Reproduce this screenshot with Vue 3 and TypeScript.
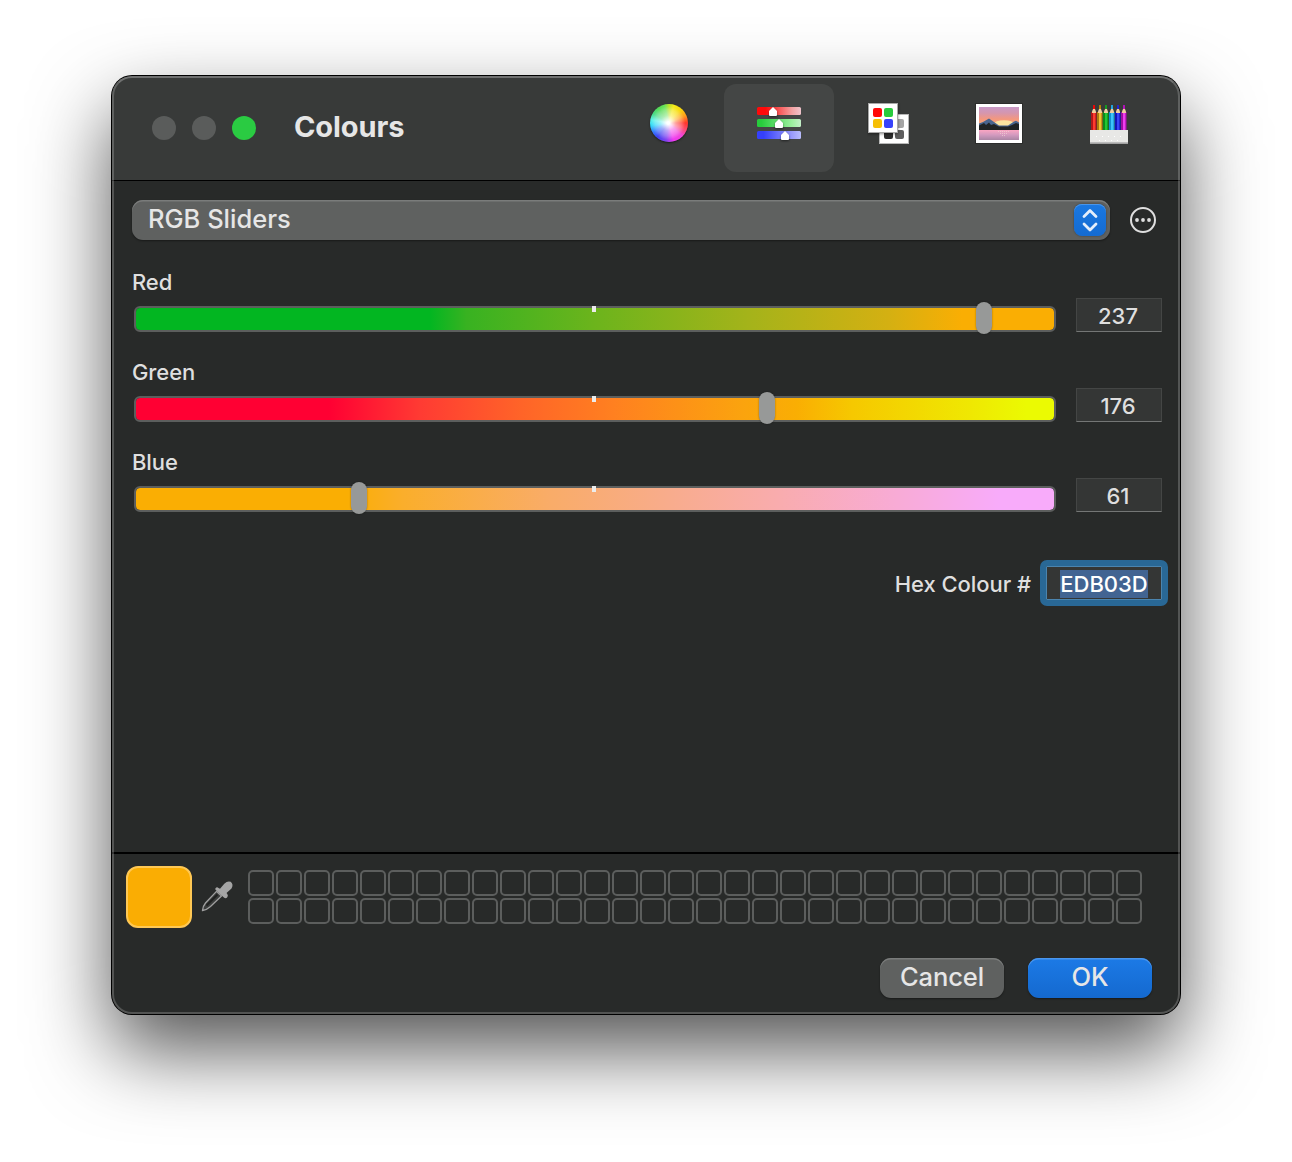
<script setup lang="ts">
import { computed, ref } from 'vue'

interface Channel {
  name: string
  value: number
  kind: string
}

const channels = ref<Channel[]>([
  { name: 'Red', value: 237, kind: 'red' },
  { name: 'Green', value: 176, kind: 'green' },
  { name: 'Blue', value: 61, kind: 'blue' },
])

const hex = computed(() =>
  channels.value.map((c) => c.value.toString(16).padStart(2, '0')).join('').toUpperCase(),
)

// The knob travels about 905px from one end of the groove to the other.
const knobLeft = (value: number) => `${Math.round((value / 255) * 905.5 - 1.6)}px`

const pencils = [
  ['#b01818', '#ff3b30', '#ff0000'],
  ['#a87c10', '#f5c12e', '#c08a00'],
  ['#0c8a1c', '#22c832', '#10a820'],
  ['#1390d0', '#3cc4fa', '#20b0f0'],
  ['#1414b8', '#3a44f8', '#2020e0'],
  ['#a010a0', '#f03cf0', '#c010c8'],
]
const cells = 64
</script>

<template>
  <main class="desktop">
    <section class="window">
      <header class="titlebar">
        <div class="lights">
          <i class="light"></i><i class="light"></i><i class="light zoom"></i>
        </div>
        <h1 class="title">Colours</h1>
        <nav class="tabs">
          <button class="tab" aria-label="Wheel">
            <span class="wheel"></span>
          </button>
          <button class="tab active" aria-label="Sliders">
            <svg width="50" height="44" viewBox="0 0 50 44">
              <defs>
                <linearGradient id="sr"><stop offset=".2" stop-color="#ff0a0a" /><stop offset=".8" stop-color="#f2a3a3" /><stop offset="1" stop-color="#efc4cc" /></linearGradient>
                <linearGradient id="sg"><stop offset=".1" stop-color="#27cc3c" /><stop offset=".8" stop-color="#9df09f" /><stop offset="1" stop-color="#c4efc8" /></linearGradient>
                <linearGradient id="sb"><stop offset=".15" stop-color="#3540fb" /><stop offset=".8" stop-color="#9c9dfb" /><stop offset="1" stop-color="#b9bdfb" /></linearGradient>
              </defs>
              <rect x="3" y="5" width="44" height="8" rx="1.5" fill="url(#sr)" />
              <rect x="3" y="17" width="44" height="8" rx="1.5" fill="url(#sg)" />
              <rect x="3" y="29" width="44" height="8" rx="1.5" fill="url(#sb)" />
              <g fill="#fff" class="knobs">
                <path d="M19 5l4 4v4q0 1-1 1h-6q-1 0-1-1V9z" />
                <path d="M25 17l4 4v4q0 1-1 1h-6q-1 0-1-1v-4z" />
                <path d="M31 29l4 4v4q0 1-1 1h-6q-1 0-1-1v-4z" />
              </g>
            </svg>
          </button>
          <button class="tab" aria-label="Palettes">
            <svg width="44" height="44" viewBox="0 0 44 44">
              <rect x="12.5" y="12.5" width="29" height="29" fill="#fff" stroke="#b8b8b8" />
              <rect x="28" y="17" width="9" height="9" rx="2" fill="#a5a5a5" />
              <rect x="17" y="28" width="9" height="9" rx="2" fill="#2c2c2c" />
              <rect x="28" y="28" width="9" height="9" rx="2" fill="#5e5e5e" />
              <g class="front">
                <rect x="1.5" y="1.5" width="29" height="29" fill="#fff" stroke="#a8a8a8" />
              </g>
              <rect x="6" y="6" width="9" height="9" rx="2" fill="#ff0808" />
              <rect x="17" y="6" width="9" height="9" rx="2" fill="#28cb3c" />
              <rect x="6" y="17" width="9" height="9" rx="2" fill="#f6bf05" />
              <rect x="17" y="17" width="9" height="9" rx="2" fill="#3742fb" />
            </svg>
          </button>
          <button class="tab" aria-label="Image">
            <svg class="photo" width="48" height="42" viewBox="0 0 48 42">
              <defs>
                <linearGradient id="sky" x2="0" y2="1"><stop offset="0" stop-color="#c99ac8" /><stop offset=".3" stop-color="#d596ae" /><stop offset=".6" stop-color="#f3977f" /><stop offset="1" stop-color="#fdb878" /></linearGradient>
                <linearGradient id="sea" x2="0" y2="1"><stop offset="0" stop-color="#fba5c2" /><stop offset=".5" stop-color="#d29abf" /><stop offset="1" stop-color="#aa86a4" /></linearGradient>
              </defs>
              <rect x=".5" y=".5" width="47" height="40" fill="#fff" stroke="#2b2c2b" />
              <rect x="4" y="4" width="40" height="20" fill="url(#sky)" />
              <ellipse cx="29" cy="21" rx="10" ry="3.800" fill="#fbe3a0" />
              <path d="M4 20.500l4-1.500 6-3.500 5 3.500 5 3.500h9l6-4 2-.8 3 1.800v5H4z" fill="#48648f" />
              <path d="M4 22.500l5-2.500 2 2 3-2.500 2 2.500 3-1 5 2.500h9l4-1.500 4-2 3 1v6H4z" fill="#202325" />
              <rect x="4" y="27" width="40" height="10" fill="url(#sea)" />
              <path d="M23 28.500h11M25 30.500h7M27 32.500h4" stroke="#f3d3d6" stroke-width="1" stroke-dasharray="1 1" opacity=".7" />
            </svg>
          </button>
          <button class="tab" aria-label="Pencils">
            <svg width="38" height="42" viewBox="0 0 38 42">
              <g v-for="(p, i) in pencils" :key="i" :transform="`translate(${1 + i * 6} 2)`">
                <path d="M0 8h5.600v18H0z" :fill="p[0]" />
                <path d="M2 8.500h2.400V26H2z" :fill="p[1]" />
                <path d="M1 9V7.500L2.300 4.500h1.400L5 7.500V9z" fill="#f0cf9e" />
                <path d="M2 5L2.200 1h1.600L4 5z" :fill="p[2]" />
              </g>
              <rect x="0" y="28" width="38" height="13.500" fill="#e8e8e6" />
              <rect x="0" y="40.300" width="38" height="1.500" fill="#a9a9a9" />
              <path d="M6 34.500h27M9 38.500h21" stroke="#fff" stroke-width="1" stroke-dasharray="1 5" />
            </svg>
          </button>
        </nav>
      </header>

      <div class="body">
        <div class="mode">
          <button class="popup">
            <span class="popup-text">RGB Sliders</span>
            <span class="stepper">
              <svg width="32" height="32" viewBox="0 0 32 32" fill="none" stroke="#e4eefb" stroke-width="2.800" stroke-linecap="round" stroke-linejoin="round">
                <path d="M10 12.500L16 6.500l6 6M10 20l6 6 6-6" />
              </svg>
            </span>
          </button>
          <svg class="more" width="28" height="28" viewBox="0 0 28 28">
            <circle cx="14" cy="14" r="12" fill="none" stroke="#dfdfdf" stroke-width="2" />
            <g fill="#dfdfdf"><circle cx="8" cy="14" r="1.900" /><circle cx="14" cy="14" r="1.900" /><circle cx="20" cy="14" r="1.900" /></g>
          </svg>
        </div>

        <div v-for="c in channels" :key="c.name" class="channel">
          <div class="slider">
            <label class="name">{{ c.name }}</label>
            <div class="track" :class="c.kind">
              <i class="tick"></i>
              <i class="knob" :style="{ left: knobLeft(c.value) }"></i>
            </div>
          </div>
          <div class="value">{{ c.value }}</div>
        </div>

        <div class="hex">
          <label class="hex-label">Hex Colour #</label>
          <div class="hex-field"><span class="selection">{{ hex }}</span></div>
        </div>
      </div>

      <footer class="footer">
        <div class="wells">
          <div class="well"></div>
          <svg class="dropper" width="34" height="34" viewBox="0 0 34 34">
            <path d="M2.500 31.500q0-3.800 3-7.500L16.500 12.300l5 4.600L10.500 27.500q-4 3.600-8 4z" fill="#3a3c3b" stroke="#a0a0a0" stroke-width="1.300" />
            <path d="M6.500 26.500l11-11" stroke="#1f201f" stroke-width="2" />
            <path d="M15.500 9.300q1.300-1.700 3-.4l1.500.8 4.300-5Q27.500 1.500 30.700 2.800q3.200 2.800.8 6.600L26.500 14l.8 1q1.300 1.900-.2 3.400t-3.200 0l-7.900-7.100q-1.300-1-.5-2z" fill="#a5a5a5" />
          </svg>
          <div class="cells"><i v-for="n in cells" :key="n" class="cell"></i></div>
        </div>
        <div class="actions">
          <button class="btn">Cancel</button>
          <button class="btn primary">OK</button>
        </div>
      </footer>
    </section>
  </main>
</template>

<style>
body {
  margin: 0;
  background: #fff;
}
</style>

<style scoped>
* {
  box-sizing: border-box;
}
button {
  border: 0;
  padding: 0;
  margin: 0;
  background: none;
  font: inherit;
  color: inherit;
}
.desktop {
  width: 1292px;
  height: 1162px;
  padding: 76px 112px 148px;
  overflow: hidden;
  font-family: Inter, 'Liberation Sans', sans-serif;
  font-weight: 450;
  color: #dfdfdf;
}
.window {
  position: relative;
  display: flex;
  flex-direction: column;
  width: 1068px;
  height: 938px;
  border-radius: 20px;
  background: #282a29;
  box-shadow: 0 0 0 1px #000, 0 36px 80px rgba(0, 0, 0, 0.68);
}
.window::after {
  content: '';
  position: absolute;
  inset: 0;
  border: 2px solid rgba(255, 255, 255, 0.2);
  border-top-color: rgba(255, 255, 255, 0.28);
  border-radius: 20px;
  pointer-events: none;
}
.titlebar {
  display: flex;
  align-items: flex-start;
  height: 105px;
  border-bottom: 1px solid #000;
  border-radius: 20px 20px 0 0;
  background: #383a39;
}
.lights {
  display: flex;
  gap: 16px;
  padding: 40px 0 0 40px;
}
.light {
  width: 24px;
  height: 24px;
  border-radius: 50%;
  background: #5a5c5b;
}
.light.zoom {
  background: #2acb42;
}
.title {
  width: 320px;
  margin: 33px 0 0 38px;
  font-size: 29px;
  line-height: 36px;
  font-weight: 700;
  letter-spacing: -0.1px;
  color: #e6e6e6;
}
.tabs {
  display: flex;
  padding: 8px 0 0 0;
  margin-left: auto;
  margin-right: 16px;
}
.tab {
  display: flex;
  justify-content: center;
  align-items: flex-start;
  width: 110px;
  height: 88px;
  padding-top: 18px;
  border-radius: 12px;
}
.tab.active {
  background: #444645;
}
.photo {
  margin-top: 1px;
}
.wheel {
  width: 38px;
  height: 38px;
  margin-top: 2px;
  border-radius: 50%;
  background: radial-gradient(circle at 48% 50%, #fff 5%, rgba(255, 255, 255, 0.55) 28%, rgba(255, 255, 255, 0.3) 48%, rgba(255, 255, 255, 0.05) 62%),
    conic-gradient(#b8e01c, #f4ea10 15deg, #f8d800 40deg, #ff9a10 65deg, #ff2a20 90deg, #ff4060 110deg, #f03cd8 135deg, #f030f0 165deg, #7a38f0 190deg, #3438f0 220deg, #2a70ff 240deg, #28d8f8 262deg, #50f0e8 280deg, #40d880 300deg, #4cd84c 325deg, #60e050 345deg, #b8e01c);
  box-shadow: 0 1px 2px rgba(0, 0, 0, 0.5);
}
.knobs {
  filter: drop-shadow(0 1px 1px rgba(0, 0, 0, 0.5));
}
.front {
  filter: drop-shadow(0 1px 1.500px rgba(0, 0, 0, 0.45));
}
.body {
  flex: 1;
  padding: 19px 18px 0 20px;
}
.mode {
  display: flex;
  align-items: center;
  gap: 19px;
  height: 40px;
}
.popup {
  display: flex;
  align-items: center;
  justify-content: space-between;
  width: 978px;
  height: 40px;
  padding: 0 4px 0 16px;
  border-radius: 11px;
  background: #5f6160;
  box-shadow: inset 0 1.500px 0 #7a7c7b, 0 1px 2px rgba(0, 0, 0, 0.4);
}
.popup-text {
  margin-top: -2px;
  font-size: 25.500px;
  line-height: 36px;
  color: #e6e6e6;
}
.stepper {
  display: flex;
  width: 32px;
  height: 32px;
  border-radius: 8px;
  background: linear-gradient(#1a78e2, #146bd2);
  box-shadow: inset 0 1px 0 #4a96ea, 0 0 2px rgba(0, 0, 0, 0.4);
}
.channel {
  display: flex;
  justify-content: space-between;
  height: 90px;
}
.slider {
  width: 924px;
  padding-top: 27px;
}
.name {
  display: block;
  height: 30px;
  line-height: 30px;
  font-size: 22px;
  letter-spacing: -0.1px;
}
.track {
  position: relative;
  width: 922px;
  height: 26px;
  margin: 9px 0 0 2px;
  border: 2px solid #5c5e5d;
  border-radius: 6px;
}
.red {
  background: linear-gradient(90deg, #02b621 32%, #38b221 36%, #6cb41c 50%, #a5b31a 67%, #d4b012 82%, #faae03 90%) padding-box;
}
.green {
  background: linear-gradient(90deg, #ff0033 21%, #ff3b33 31%, #ff6428 42%, #ff8020 52%, #fba30e 66%, #faae03 72%, #f6c800 78%, #efe802 91%, #ebfa02 97%) padding-box;
}
.blue {
  background: linear-gradient(90deg, #faae03 23%, #faae2b 29%, #f9ac68 45%, #f8ac8c 58%, #f9acae 70%, #f8abd6 83%, #f8abfa 94%) padding-box;
}
.tick {
  position: absolute;
  left: 456px;
  top: -2px;
  width: 4px;
  height: 6px;
  background: #ececec;
}
.knob {
  position: absolute;
  top: -6px;
  width: 16px;
  height: 32px;
  border-radius: 8px;
  background: #979998;
  box-shadow: 0 0 2px rgba(0, 0, 0, 0.4);
}
.value {
  width: 86px;
  height: 34px;
  padding-right: 2px;
  margin-top: 58px;
  border: 1px solid #444645;
  border-bottom: 1px solid #747675;
  background: #343635;
  font-size: 22px;
  line-height: 34px;
  text-align: center;
}
.hex {
  display: flex;
  justify-content: flex-end;
  align-items: center;
  gap: 9px;
  height: 46px;
  margin: 50px -6px 0 0;
}
.hex-label {
  margin-top: 2px;
  font-size: 22px;
  line-height: 30px;
  letter-spacing: -0.05px;
}
.hex-field {
  display: flex;
  justify-content: flex-end;
  align-items: center;
  width: 128px;
  height: 46px;
  padding: 0 14px 0 0;
  border: 6px solid #296896;
  border-radius: 7px;
  background: #343635 padding-box;
  box-shadow: inset 0 0 0 1px #4b84ae;
}
.selection {
  width: 88px;
  height: 28px;
  margin-top: 1px;
  background: #426492;
  color: #fff;
  font-size: 22px;
  line-height: 28px;
  text-align: center;
  white-space: nowrap;
}
.footer {
  height: 162px;
  border-top: 2px solid #000;
  padding: 12px 28px 0 14px;
}
.wells {
  display: flex;
  align-items: flex-start;
}
.well {
  width: 66px;
  height: 62px;
  border: 2px solid #ffc854;
  border-radius: 12px;
  background: #faad03;
}
.dropper {
  margin: 13px 0 0 8px;
}
.cells {
  display: grid;
  grid-template-columns: repeat(32, 26px);
  gap: 2px;
  margin: 4px 0 0 14px;
}
.cell {
  height: 26px;
  border: 2px solid #5c5e5d;
  border-radius: 5px;
}
.actions {
  display: flex;
  justify-content: flex-end;
  gap: 24px;
  margin-top: 30px;
}
.btn {
  width: 124px;
  height: 40px;
  padding-bottom: 4px;
  border-radius: 11px;
  background: #5f6160;
  box-shadow: inset 0 1.500px 0 #7a7c7b, 0 1px 2px rgba(0, 0, 0, 0.4);
  font-size: 25.500px;
  letter-spacing: -0.1px;
  color: #e6e6e6;
}
.btn.primary {
  background: linear-gradient(#1c7ae6, #1469cf);
  box-shadow: inset 0 1.500px 0 #4a96ee, 0 1px 2px rgba(0, 0, 0, 0.4);
}
</style>
